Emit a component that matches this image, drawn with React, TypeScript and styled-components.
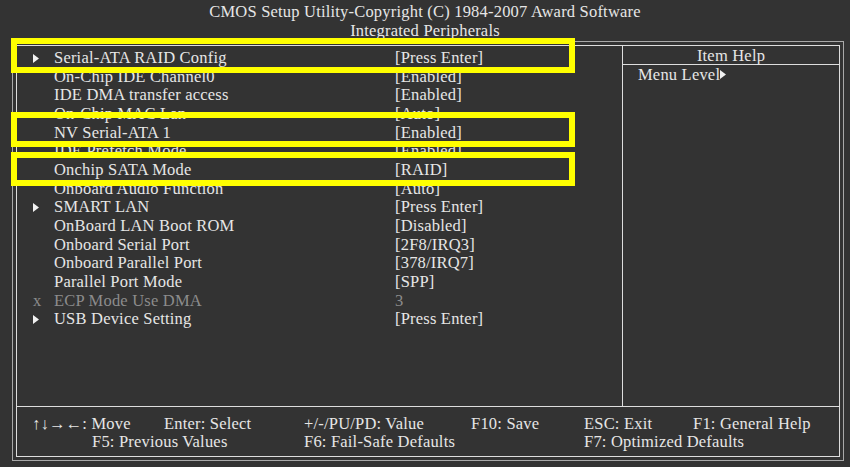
import styled, { createGlobalStyle } from "styled-components";

const GlobalStyle = createGlobalStyle`
  html, body {
    margin: 0;
    padding: 0;
    background: #333333;
  }
  body {
    font-family: "Liberation Serif", "Times New Roman", serif;
    color: #e6e6e6;
  }
`;

const Screen = styled.div`
  position: relative;
  width: 850px;
  height: 467px;
  overflow: hidden;
  background: #333333;
  font-size: 16.5px;
  letter-spacing: 0.2px;
`;

const Title = styled.header`
  box-sizing: border-box;
  height: 41px;
  padding-top: 2px;
  text-align: center;
  line-height: 19px;
`;

const Frame = styled.div`
  box-sizing: border-box;
  margin-left: 12px;
  width: 832px;
  height: 420px;
  border: 1px solid #a9a9a9;
  padding: 3px;
`;

const Inner = styled.div`
  box-sizing: border-box;
  height: 100%;
  border: 1px solid #dedede;
  display: flex;
  flex-direction: column;
`;

const Main = styled.div`
  display: flex;
  height: 360px;
`;

const ItemList = styled.div`
  width: 605px;
  padding-top: 3px;
  display: flex;
  flex-direction: column;
`;

const Row = styled.div<{ $disabled?: boolean }>`
  display: grid;
  grid-template-columns: 16px 21px 341px 1fr;
  height: 18.68px;
  line-height: 18.68px;
  white-space: nowrap;
  color: ${(p) => (p.$disabled ? "#8c8c8c" : "#e6e6e6")};
`;

const Marker = styled.span`
  grid-column: 2;
  display: flex;
  align-items: center;
`;

const Label = styled.span`
  grid-column: 3;
`;

const Value = styled.span`
  grid-column: 4;
`;

const HelpPanel = styled.aside`
  flex: 1;
  border-left: 1px solid #dedede;
  display: flex;
  flex-direction: column;
`;

const HelpHeader = styled.div`
  height: 18px;
  line-height: 20px;
  border-bottom: 1px solid #dedede;
  text-align: center;
`;

const HelpText = styled.div`
  padding-left: 15px;
  line-height: 19px;
  display: flex;
  align-items: center;
`;

const Footer = styled.footer`
  flex: 1;
  border-top: 1px solid #dedede;
  padding: 8px 0 0 15px;
  display: grid;
  grid-template-columns: 60px 72px 140px 167px 113px 109px 1fr;
  grid-auto-rows: 18px;
  line-height: 18px;
  white-space: nowrap;
`;

const Key = styled.span<{ $col: string; $row: number }>`
  grid-column: ${(p) => p.$col};
  grid-row: ${(p) => p.$row};
`;

const Callout = styled.div<{ $top: number; $height: number }>`
  position: absolute;
  left: 11px;
  width: 564px;
  top: ${(p) => p.$top}px;
  height: ${(p) => p.$height}px;
  box-sizing: border-box;
  border: 6px solid #ffff00;
  pointer-events: none;
`;

const Arrow = () => (
  <svg width="6" height="9" viewBox="0 0 6 9">
    <polygon points="0,0 6,4.5 0,9" fill="#f2f2f2" />
  </svg>
);

type Item = { label: string; value: string; sub?: boolean; disabled?: boolean };

const items: Item[] = [
  { label: "Serial-ATA RAID Config", value: "[Press Enter]", sub: true },
  { label: "On-Chip IDE Channel0", value: "[Enabled]" },
  { label: "IDE DMA transfer access", value: "[Enabled]" },
  { label: "On-Chip MAC Lan", value: "[Auto]" },
  { label: "NV Serial-ATA 1", value: "[Enabled]" },
  { label: "IDE Prefetch Mode", value: "[Enabled]" },
  { label: "Onchip SATA Mode", value: "[RAID]" },
  { label: "Onboard Audio Function", value: "[Auto]" },
  { label: "SMART LAN", value: "[Press Enter]", sub: true },
  { label: "OnBoard LAN Boot ROM", value: "[Disabled]" },
  { label: "Onboard Serial Port", value: "[2F8/IRQ3]" },
  { label: "Onboard Parallel Port", value: "[378/IRQ7]" },
  { label: "Parallel Port Mode", value: "[SPP]" },
  { label: "ECP Mode Use DMA", value: "3", disabled: true },
  { label: "USB Device Setting", value: "[Press Enter]", sub: true },
];

export default function App() {
  return (
    <>
      <GlobalStyle />
      <Screen>
        <Title>
          <div>CMOS Setup Utility-Copyright (C) 1984-2007 Award Software</div>
          <div>Integrated Peripherals</div>
        </Title>

        <Frame>
          <Inner>
            <Main>
              <ItemList>
                {items.map((item) => (
                  <Row key={item.label} $disabled={item.disabled}>
                    <Marker>{item.sub ? <Arrow /> : item.disabled ? "x" : null}</Marker>
                    <Label>{item.label}</Label>
                    <Value>{item.value}</Value>
                  </Row>
                ))}
              </ItemList>

              <HelpPanel>
                <HelpHeader>Item Help</HelpHeader>
                <HelpText>
                  Menu Level
                  <Arrow />
                </HelpText>
              </HelpPanel>
            </Main>

            <Footer>
              <Key $col="1 / span 2" $row={1}>↑↓→←: Move</Key>
              <Key $col="3" $row={1}>Enter: Select</Key>
              <Key $col="4" $row={1}>+/-/PU/PD: Value</Key>
              <Key $col="5" $row={1}>F10: Save</Key>
              <Key $col="6" $row={1}>ESC: Exit</Key>
              <Key $col="7" $row={1}>F1: General Help</Key>
              <Key $col="2 / span 2" $row={2}>F5: Previous Values</Key>
              <Key $col="4 / span 2" $row={2}>F6: Fail-Safe Defaults</Key>
              <Key $col="6 / span 2" $row={2}>F7: Optimized Defaults</Key>
            </Footer>
          </Inner>
        </Frame>

        <Callout $top={38} $height={35} />
        <Callout $top={112} $height={35} />
        <Callout $top={152} $height={34} />
      </Screen>
    </>
  );
}
